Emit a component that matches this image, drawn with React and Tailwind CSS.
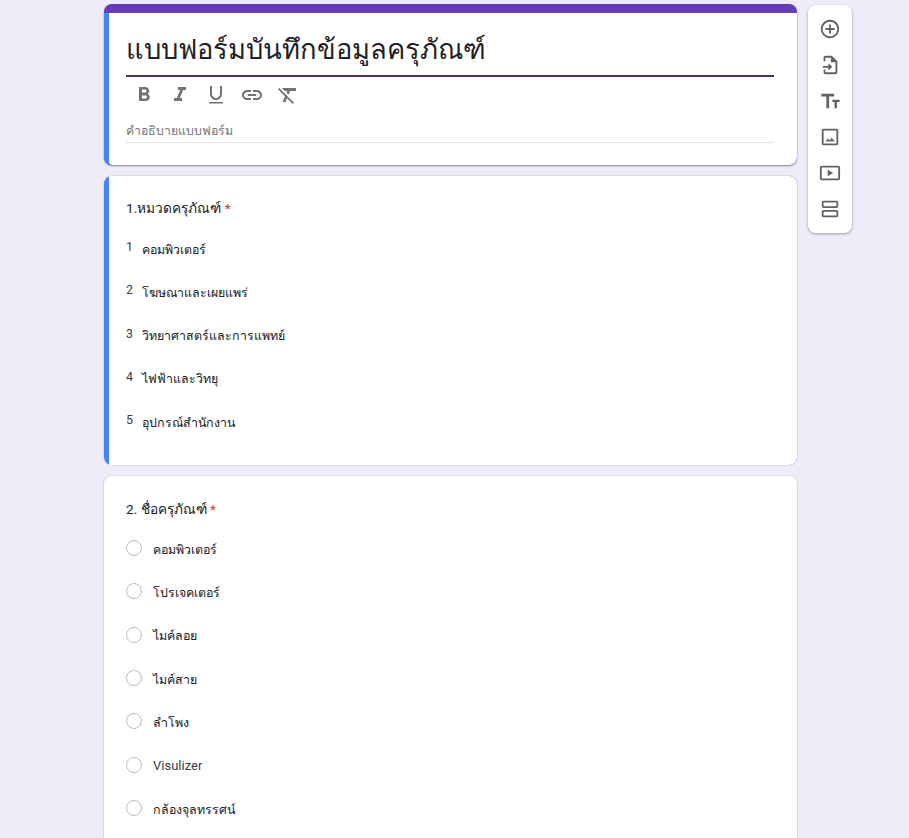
const categories = [
  "คอมพิวเตอร์",
  "โฆษณาและเผยแพร่",
  "วิทยาศาสตร์และการแพทย์",
  "ไฟฟ้าและวิทยุ",
  "อุปกรณ์สำนักงาน",
];

const items = [
  "คอมพิวเตอร์",
  "โปรเจคเตอร์",
  "ไมค์ลอย",
  "ไมค์สาย",
  "ลำโพง",
  "Visulizer",
  "กล้องจุลทรรศน์",
];

// Text format buttons under the title
const formatIcons = [
  "M15.6 10.79c.97-.67 1.65-1.77 1.65-2.79 0-2.26-1.75-4-4-4H7v14h7.04c2.09 0 3.71-1.7 3.71-3.79 0-1.52-.86-2.82-2.15-3.42zM10 6.5h3c.83 0 1.5.67 1.5 1.5s-.67 1.5-1.5 1.5h-3v-3zm3.5 9H10v-3h3.5c.83 0 1.5.67 1.5 1.5s-.67 1.5-1.5 1.5z",
  "M10 4v3h2.21l-3.42 8H6v3h8v-3h-2.21l3.42-8H18V4z",
  "M12 17c3.31 0 6-2.69 6-6V3h-2v8c0 2.2-1.8 4-4 4s-4-1.8-4-4V3H6v8c0 3.31 2.69 6 6 6zm-7 2v1.500h14V19H5z",
  "M3.9 12c0-1.71 1.39-3.1 3.1-3.1h4V7H7c-2.76 0-5 2.24-5 5s2.24 5 5 5h4v-1.9H7c-1.71 0-3.1-1.39-3.1-3.1zM8 13h8v-2H8v2zm9-6h-4v1.9h4c1.71 0 3.1 1.39 3.1 3.1s-1.39 3.1-3.1 3.1h-4V17h4c2.76 0 5-2.24 5-5s-2.24-5-5-5z",
  "M3.27 5L2 6.27l6.97 6.97L6.5 19h3l1.57-3.66L16.73 21 18 19.73 3.55 5.27 3.27 5zM6 5v.18L8.82 8h2.4l-.72 1.68 2.1 2.1L14.21 8H20V5H6z",
];

// Side toolbar icons
const toolIcons = [
  "M13 7h-2v4H7v2h4v4h2v-4h4v-2h-4V7zm-1-5C6.48 2 2 6.48 2 12s4.48 10 10 10 10-4.48 10-10S17.52 2 12 2zm0 18c-4.41 0-8-3.59-8-8s3.59-8 8-8 8 3.59 8 8-3.59 8-8 8z",
  "M14 2H7C5.9 2 5 2.9 5 4v4h2V4h6v5h5v11H7v-3H5v3c0 1.1.9 2 2 2h11c1.1 0 2-.9 2-2V8l-6-6zM11 10.5l-1.4 1.4 1.1 1.1H4v2h6.7l-1.1 1.1 1.4 1.4 3.5-3.5z",
  "M2.5 4v3H8v13h3V7h5.5V4h-14zm12 6.5v2.6H17V20h2.6v-6.9h2.9v-2.6h-8z",
  "M19 3H5c-1.1 0-2 .9-2 2v14c0 1.1.9 2 2 2h14c1.1 0 2-.9 2-2V5c0-1.1-.9-2-2-2zm0 16H5V5h14v14zm-5-6.5-2.5 3.2-1.7-2.1L7 17h10l-3-4.5z",
  "M21 4H3c-1.1 0-2 .9-2 2v12c0 1.1.9 2 2 2h18c1.1 0 2-.9 2-2V6c0-1.1-.9-2-2-2zm0 14H3V6h18v12zM9.5 8.5v7l6-3.5z",
  "M19 13H5c-1.1 0-2 .9-2 2v4c0 1.1.9 2 2 2h14c1.1 0 2-.9 2-2v-4c0-1.1-.9-2-2-2zm0 6H5v-4h14v4zM19 3H5c-1.1 0-2 .9-2 2v4c0 1.1.9 2 2 2h14c1.1 0 2-.9 2-2V5c0-1.1-.9-2-2-2zm0 6H5V5h14v4z",
];

function Icon({ d, size, color }) {
  return (
    <svg width={size} height={size} viewBox="0 0 24 24" fill={color}>
      <path d={d} />
    </svg>
  );
}

function QuestionTitle({ children }) {
  return (
    <p className="text-[13.7px] leading-[20px] text-[#202124]">
      {children} <span className="text-[#c5372c]">*</span>
    </p>
  );
}

export default function App() {
  return (
    <div
      className="h-[838px] overflow-hidden bg-[#f0ebf8] flex items-start pt-[4px] pl-[104px]"
      style={{ fontFamily: 'Roboto, "Noto Sans", "Liberation Sans", sans-serif' }}
    >
      <div className="w-[693px] shrink-0 flex flex-col gap-[11px]">
        {/* Form header */}
        <div className="h-[161px] rounded-lg bg-[#673ab7] pt-[9px] shadow-[0_1px_2px_rgba(0,0,0,0.45)]">
          <div className="h-[152px] rounded-b-lg bg-[#4285f4] pl-[5px]">
            <div className="h-full rounded-bl-[4px] rounded-br-lg bg-white pl-[17px] pr-[23px]">
              <h1 className="h-[64px] pt-[19px] text-[27.3px] leading-[36px] text-[#202124] border-b-2 border-[#4a2f6b]">
                แบบฟอร์มบันทึกข้อมูลครุภัณฑ์
              </h1>
              <div className="flex items-center gap-[12px] pl-[6px] mt-[6px] h-[24px]">
                {formatIcons.map((d) => (
                  <Icon key={d} d={d} size={24} color="#70757a" />
                ))}
              </div>
              <p className="mt-[12px] h-[24px] border-b border-[#e0e0e0] text-[12.3px] leading-[24px] text-[#70757a]">
                คำอธิบายแบบฟอร์ม
              </p>
            </div>
          </div>
        </div>

        {/* Question 1 */}
        <div className="h-[289px] rounded-lg bg-[#4285f4] pl-[5px] shadow-[0_0_0_1px_#dadce0]">
          <div className="h-full rounded-r-lg bg-white pl-[17px] pt-[22px]">
            <QuestionTitle>1.หมวดครุภัณฑ์</QuestionTitle>
            <div className="mt-[22px] flex flex-col gap-[23.25px]">
              {categories.map((name, i) => (
                <div key={name} className="flex h-[20px] items-center text-[12.4px] text-[#202124]">
                  <span className="w-[16px] text-[12.500px] text-[#3c4043] -mt-[5px]">{i + 1}</span>
                  <span>{name}</span>
                </div>
              ))}
            </div>
          </div>
        </div>

        {/* Question 2 */}
        <div className="h-[400px] rounded-lg bg-white pl-[22px] pt-[23px] shadow-[0_0_0_1px_#dadce0]">
          <QuestionTitle>2. ชื่อครุภัณฑ์</QuestionTitle>
          <div className="mt-[21px] flex flex-col gap-[23.33px]">
            {items.map((name) => (
              <div key={name} className="flex h-[20px] items-center text-[12.4px] text-[#202124]">
                <span className="mr-[11px] h-[16px] w-[16px] rounded-full border border-[#bdbdbd] -mt-[4px]" />
                <span className={name === "Visulizer" ? "text-[13px] text-[#3c4043] -mt-[2px]" : ""}>{name}</span>
              </div>
            ))}
          </div>
        </div>
      </div>

      {/* Side toolbar */}
      <div className="ml-[11px] mt-[1px] flex h-[228px] w-[44px] shrink-0 flex-col items-center gap-[14px] rounded-lg bg-white pt-[12.5px] shadow-[0_1px_3px_rgba(0,0,0,0.35)]">
        {toolIcons.map((d) => (
          <Icon key={d} d={d} size={22} color="#5f6368" />
        ))}
      </div>
    </div>
  );
}
